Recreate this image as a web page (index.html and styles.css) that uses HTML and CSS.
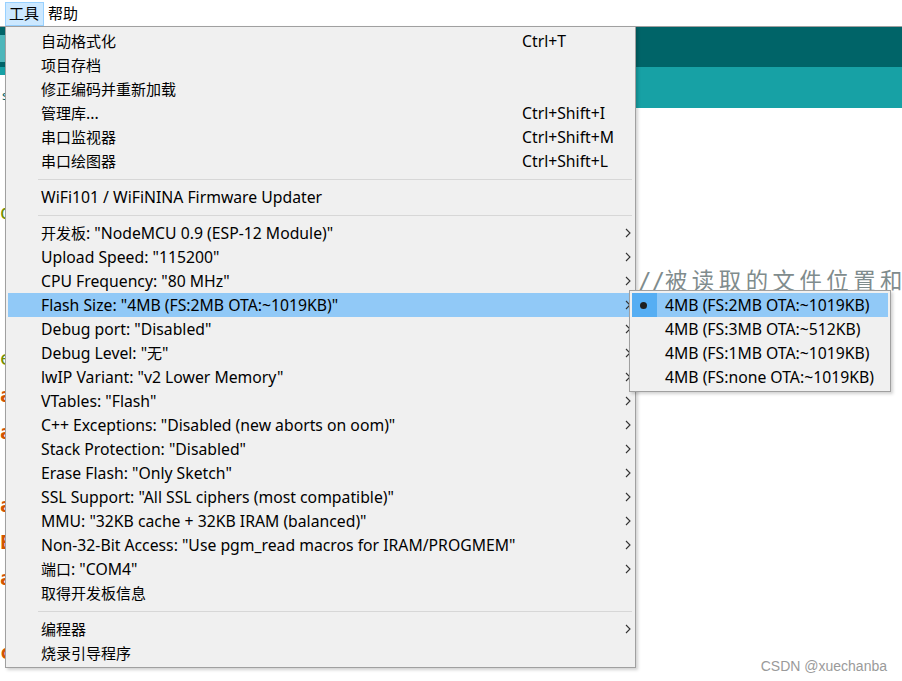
FILE: index.html
```html
<!DOCTYPE html>
<html lang="zh-CN">
<head>
<meta charset="utf-8">
<title>Arduino - 工具</title>
<link rel="stylesheet" href="styles.css">
</head>
<body>
<div class="app">
  <div class="menubar">
    <span class="mb-item active">工具</span>
    <span class="mb-item">帮助</span>
  </div>
  <div class="toolbar"><span class="tb-btn"></span></div>
  <div class="tabbar"><span class="tab">s</span></div>
  <div class="editor">
    <div class="line"> </div>
    <div class="line"> </div>
    <div class="line"><span class="olive">d</span></div>
    <div class="line"> </div>
    <div class="line cmt-line"><span class="cmt">//<span class="cmt-zh">被读取的文件位置和</span></span></div>
    <div class="line"> </div>
    <div class="line"><span class="olive">e</span></div>
    <div class="line"><span class="kw">a</span></div>
    <div class="line"><span class="kw">a</span></div>
    <div class="line"> </div>
    <div class="line"><span class="kw">a</span></div>
    <div class="line"><span class="kw">E</span></div>
    <div class="line"><span class="kw">a</span></div>
    <div class="line"> </div>
    <div class="line"><span class="kw">c</span></div>
  </div>

  <div class="menu main">
    <div class="item"><span class="zh">自动格式化</span><span>Ctrl+T</span><span></span></div>
    <div class="item"><span class="zh">项目存档</span><span></span><span></span></div>
    <div class="item"><span class="zh">修正编码并重新加载</span><span></span><span></span></div>
    <div class="item"><span><span class="zh">管理库</span>...</span><span>Ctrl+Shift+I</span><span></span></div>
    <div class="item"><span class="zh">串口监视器</span><span>Ctrl+Shift+M</span><span></span></div>
    <div class="item"><span class="zh">串口绘图器</span><span>Ctrl+Shift+L</span><span></span></div>
    <div class="sep"></div>
    <div class="item"><span>WiFi101 / WiFiNINA Firmware Updater</span><span></span><span></span></div>
    <div class="sep"></div>
    <div class="item"><span><span class="zh">开发板</span>: "NodeMCU 0.9 (ESP-12 Module)"</span><span></span><span class="arr"><svg width="6" height="10" viewBox="0 0 6 10"><path d="M1 1l4 4-4 4" fill="none" stroke="#333" stroke-width="1.1"/></svg></span></div>
    <div class="item"><span>Upload Speed: "115200"</span><span></span><span class="arr"><svg width="6" height="10" viewBox="0 0 6 10"><path d="M1 1l4 4-4 4" fill="none" stroke="#333" stroke-width="1.1"/></svg></span></div>
    <div class="item"><span>CPU Frequency: "80 MHz"</span><span></span><span class="arr"><svg width="6" height="10" viewBox="0 0 6 10"><path d="M1 1l4 4-4 4" fill="none" stroke="#333" stroke-width="1.1"/></svg></span></div>
    <div class="item hl"><span>Flash Size: "4MB (FS:2MB OTA:~1019KB)"</span><span></span><span class="arr"><svg width="6" height="10" viewBox="0 0 6 10"><path d="M1 1l4 4-4 4" fill="none" stroke="#333" stroke-width="1.1"/></svg></span></div>
    <div class="item"><span>Debug port: "Disabled"</span><span></span><span class="arr"><svg width="6" height="10" viewBox="0 0 6 10"><path d="M1 1l4 4-4 4" fill="none" stroke="#333" stroke-width="1.1"/></svg></span></div>
    <div class="item"><span>Debug Level: "<span class="zh">无</span>"</span><span></span><span class="arr"><svg width="6" height="10" viewBox="0 0 6 10"><path d="M1 1l4 4-4 4" fill="none" stroke="#333" stroke-width="1.1"/></svg></span></div>
    <div class="item"><span>lwIP Variant: "v2 Lower Memory"</span><span></span><span class="arr"><svg width="6" height="10" viewBox="0 0 6 10"><path d="M1 1l4 4-4 4" fill="none" stroke="#333" stroke-width="1.1"/></svg></span></div>
    <div class="item"><span>VTables: "Flash"</span><span></span><span class="arr"><svg width="6" height="10" viewBox="0 0 6 10"><path d="M1 1l4 4-4 4" fill="none" stroke="#333" stroke-width="1.1"/></svg></span></div>
    <div class="item"><span>C++ Exceptions: "Disabled (new aborts on oom)"</span><span></span><span class="arr"><svg width="6" height="10" viewBox="0 0 6 10"><path d="M1 1l4 4-4 4" fill="none" stroke="#333" stroke-width="1.1"/></svg></span></div>
    <div class="item"><span>Stack Protection: "Disabled"</span><span></span><span class="arr"><svg width="6" height="10" viewBox="0 0 6 10"><path d="M1 1l4 4-4 4" fill="none" stroke="#333" stroke-width="1.1"/></svg></span></div>
    <div class="item"><span>Erase Flash: "Only Sketch"</span><span></span><span class="arr"><svg width="6" height="10" viewBox="0 0 6 10"><path d="M1 1l4 4-4 4" fill="none" stroke="#333" stroke-width="1.1"/></svg></span></div>
    <div class="item"><span>SSL Support: "All SSL ciphers (most compatible)"</span><span></span><span class="arr"><svg width="6" height="10" viewBox="0 0 6 10"><path d="M1 1l4 4-4 4" fill="none" stroke="#333" stroke-width="1.1"/></svg></span></div>
    <div class="item"><span>MMU: "32KB cache + 32KB IRAM (balanced)"</span><span></span><span class="arr"><svg width="6" height="10" viewBox="0 0 6 10"><path d="M1 1l4 4-4 4" fill="none" stroke="#333" stroke-width="1.1"/></svg></span></div>
    <div class="item"><span>Non-32-Bit Access: "Use pgm_read macros for IRAM/PROGMEM"</span><span></span><span class="arr"><svg width="6" height="10" viewBox="0 0 6 10"><path d="M1 1l4 4-4 4" fill="none" stroke="#333" stroke-width="1.1"/></svg></span></div>
    <div class="item"><span><span class="zh">端口</span>: "COM4"</span><span></span><span class="arr"><svg width="6" height="10" viewBox="0 0 6 10"><path d="M1 1l4 4-4 4" fill="none" stroke="#333" stroke-width="1.1"/></svg></span></div>
    <div class="item"><span class="zh">取得开发板信息</span><span></span><span></span></div>
    <div class="sep"></div>
    <div class="item"><span class="zh">编程器</span><span></span><span class="arr"><svg width="6" height="10" viewBox="0 0 6 10"><path d="M1 1l4 4-4 4" fill="none" stroke="#333" stroke-width="1.1"/></svg></span></div>
    <div class="item"><span class="zh">烧录引导程序</span><span></span><span></span></div>
  </div>

  <div class="menu sub">
    <div class="item hl"><span class="check"><span class="dot"></span></span><span>4MB (FS:2MB OTA:~1019KB)</span></div>
    <div class="item"><span class="check"></span><span>4MB (FS:3MB OTA:~512KB)</span></div>
    <div class="item"><span class="check"></span><span>4MB (FS:1MB OTA:~1019KB)</span></div>
    <div class="item"><span class="check"></span><span>4MB (FS:none OTA:~1019KB)</span></div>
  </div>

  <div class="watermark">CSDN @xuechanba</div>
</div>
</body>
</html>
```

FILE: styles.css
```css
* { box-sizing: border-box; }

body {
  margin: 0;
  width: 902px;
  height: 681px;
  overflow: hidden;
  background: #fff;
  font-family: "Noto Sans", "Noto Sans CJK SC", sans-serif;
  color: #000;
}

.app {
  position: relative;
  width: 902px;
  height: 681px;
  overflow: hidden;
}

/* ---------- menu bar ---------- */
.menubar {
  height: 27px;
  border-bottom: 1px solid #a0a0a0;
  display: flex;
  align-items: flex-start;
  padding: 2px 0 0 5px;
  font-size: 15px;
}
.mb-item {
  height: 24px;
  line-height: 21px;
  padding: 0 4px 0 3px;
  border: 1px solid transparent;
}
.mb-item.active {
  background: #cce8ff;
  border-color: #99d1ff;
}

/* ---------- IDE background ---------- */
.toolbar {
  height: 40px;
  background: #006468;
  padding-top: 8px;
}
.tb-btn {
  display: block;
  width: 5px;
  height: 27px;
  background: #4db6ba;
}
.tabbar {
  height: 41px;
  background: #17a1a5;
  padding-top: 8px;
}
.tab {
  display: block;
  width: 200px;
  height: 33px;
  background: #fff;
  color: #006468;
  font-size: 13px;
  padding: 12px 0 0 2px;
  line-height: 16px;
}

.editor {
  padding-top: 12px;
}
.line {
  display: flex;
  align-items: center;
  height: 36.67px;
  font-family: "DejaVu Sans Mono", "Noto Sans CJK SC", monospace;
  font-size: 20px;
  white-space: pre;
}
.olive { color: #728e00; }
.kw { color: #d35400; font-weight: bold; }
.cmt-line {
  padding-left: 638px;
}
.cmt {
  font-size: 22.4px;
  line-height: 26px;
  color: #7f8c8d;
  margin-top: -7px;
}
.cmt-zh {
  letter-spacing: 4.5px;
}

/* ---------- popup menus ---------- */
.menu {
  position: absolute;
  background: #f0f0f0;
  border: 1px solid #a0a0a0;
  padding: 2px;
  box-shadow: 2px 2px 3px rgba(0, 0, 0, 0.18);
  font-size: 15.75px;
  white-space: nowrap;
}
.menu .zh {
  font-size: 15px;
}
.menu.main {
  left: 5px;
  top: 26px;
  width: 631px;
  height: 642px;
}
.menu.sub {
  left: 629px;
  top: 290px;
  width: 262px;
  height: 102px;
}

.item {
  display: grid;
  grid-template-columns: 481px 1fr 12px;
  align-items: center;
  height: 24px;
  line-height: 24px;
  padding-left: 33px;
}
.item.hl { background: #91c9f7; }

.arr {
  display: flex;
  align-items: center;
  padding-left: 4px;
}
.arr svg { display: block; }

.sep {
  height: 12px;
  display: flex;
  align-items: center;
  padding: 0 1px 0 30px;
}
.sep::after {
  content: "";
  flex: 1;
  height: 1px;
  background: #d7d7d7;
}

.sub .item {
  grid-template-columns: 25px 1fr;
  padding-left: 0;
  column-gap: 8px;
}
.check {
  height: 24px;
  display: flex;
  align-items: center;
  padding-left: 8px;
}
.hl .check { background: #56aef3; }
.dot {
  width: 7px;
  height: 7px;
  border-radius: 50%;
  background: #1f1f1f;
}

.watermark {
  position: absolute;
  right: 15px;
  bottom: 7px;
  font-family: "Liberation Sans", sans-serif;
  font-size: 14px;
  line-height: 16px;
  color: #9a9a9a;
}
```
